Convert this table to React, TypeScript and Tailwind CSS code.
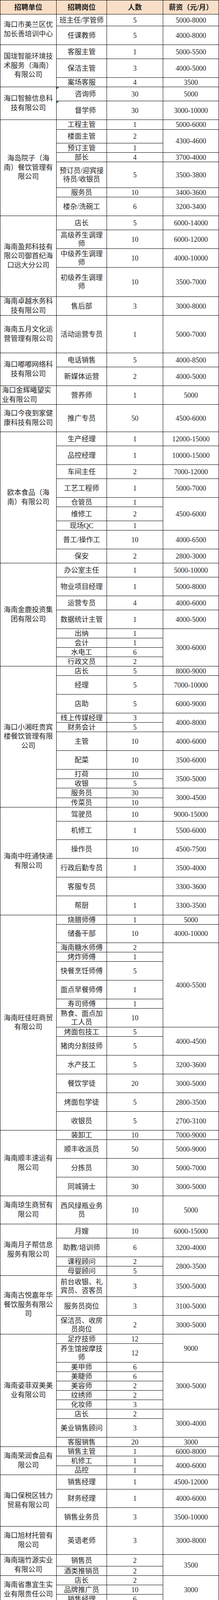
import type { ReactNode } from 'react'

type Job = {
  t: string
  n: string
  s?: string
  span?: number
  h: string
  flag?: boolean
}

type Company = {
  name: string
  left?: boolean
  jobs: Job[]
}

const spanClass: Record<number, string> = {
  1: 'row-span-1',
  2: 'row-span-2',
  3: 'row-span-3',
  4: 'row-span-4',
  5: 'row-span-5',
  6: 'row-span-6',
  7: 'row-span-7',
  8: 'row-span-8',
  9: 'row-span-9',
  10: 'row-span-10',
  11: 'row-span-11',
  14: 'row-span-14',
}

const companies: Company[] = [
  {
    name: '海口市美兰区优\n加长善培训中心',
    jobs: [
      { t: '班主任/学管师', n: '5', s: '5000-8000', h: 'h-[29px]' },
      { t: '任课教师', n: '5', s: '4000-8000', h: 'h-[47px]' },
    ],
  },
  {
    name: '国珑智能环境技\n术服务（海南）\n有限公司',
    jobs: [
      { t: '客服主管', n: '1', s: '5000-5500', h: 'h-[35px]' },
      { t: '保洁主管', n: '3', s: '4000-5000', h: 'h-[47px]' },
      { t: '案场客服', n: '4', s: '3500', h: 'h-[23px]' },
    ],
  },
  {
    name: '海口智鲸信息科\n技有限公司',
    jobs: [
      { t: '咨询师', n: '30', s: '5000', h: 'h-[35px]', flag: true },
      { t: '督学师', n: '30', s: '3000-10000', h: 'h-[47px]', flag: true },
    ],
  },
  {
    name: '海岛院子（海\n南）餐饮管理有\n限公司',
    jobs: [
      { t: '工程主管', n: '1', s: '5000-6000', h: 'h-[24px]' },
      { t: '楼面主管', n: '2', s: '4300-4600', span: 2, h: 'h-[34px]' },
      { t: '预订主管', n: '1', h: 'h-[23px]' },
      { t: '部长', n: '4', s: '3700-4000', h: 'h-[23px]' },
      { t: '预订员/迎宾接待员/收银员', n: '5', s: '3500-3800', h: 'h-[65px]' },
      { t: '服务员', n: '10', s: '3400-3600', h: 'h-[23px]' },
      { t: '楼杂/洗碗工', n: '6', s: '3200-3400', h: 'h-[47px]' },
    ],
  },
  {
    name: '海南盈邦科技有\n限公司御首纪海\n口远大分公司',
    jobs: [
      { t: '店长', n: '5', s: '6000-14000', h: 'h-[35px]' },
      { t: '高级养生调理师', n: '10', s: '6000-12000', h: 'h-[47px]' },
      { t: '中级养生调理师', n: '10', s: '4000-10000', h: 'h-[47px]' },
      { t: '初级养生调理师', n: '10', s: '3500-7000', h: 'h-[74px]' },
    ],
  },
  {
    name: '海南卓越水务科\n技有限公司',
    jobs: [{ t: '售后部', n: '3', s: '3000-8000', h: 'h-[47px]' }],
  },
  {
    name: '海南五月文化运\n营管理有限公司',
    jobs: [{ t: '活动运营专员', n: '1', s: '5000-7000', h: 'h-[95px]' }],
  },
  {
    name: '海口嘟嘟网络科\n技有限公司',
    jobs: [
      { t: '电话销售', n: '5', s: '4000-8500', h: 'h-[35px]' },
      { t: '新媒体运营', n: '2', s: '4000-5000', h: 'h-[47px]' },
    ],
  },
  {
    name: '海口金辉曦望实\n业有限公司',
    left: true,
    jobs: [{ t: '营养师', n: '1', s: '5000', h: 'h-[47px]' }],
  },
  {
    name: '海口今夜到家健\n康科技有限公司',
    jobs: [{ t: '推广专员', n: '50', s: '4500-6000', h: 'h-[69px]' }],
  },
  {
    name: '欧本食品（海\n南）有限公司',
    jobs: [
      { t: '生产经理', n: '1', s: '12000-15000', h: 'h-[35px]' },
      { t: '品控经理', n: '1', s: '10000-15000', h: 'h-[47px]' },
      { t: '车间主任', n: '2', s: '7000-12000', h: 'h-[35px]' },
      { t: '工艺工程师', n: '1', s: '5000-7000', h: 'h-[47px]' },
      { t: '仓管员', n: '1', s: '4500-6000', span: 3, h: 'h-[23px]' },
      { t: '维修工', n: '2', h: 'h-[35px]' },
      { t: '现场QC', n: '1', h: 'h-[23px]' },
      { t: '普工/操作工', n: '10', s: '4000-6500', h: 'h-[47px]' },
      { t: '保安', n: '2', s: '2800-3000', h: 'h-[35px]' },
    ],
  },
  {
    name: '海南金鹿投资集\n团有限公司',
    jobs: [
      { t: '办公室主任', n: '1', s: '5000-10000', h: 'h-[35px]' },
      { t: '物业项目经理', n: '1', s: '5000-8000', h: 'h-[47px]' },
      { t: '运营专员', n: '4', s: '4000-6000', h: 'h-[35px]' },
      { t: '数据统计主管', n: '1', s: '4000-5000', h: 'h-[47px]' },
      { t: '出纳', n: '1', s: '3000-6000', span: 4, h: 'h-[23px]' },
      { t: '会计', n: '1', h: 'h-[23px]' },
      { t: '水电工', n: '6', h: 'h-[23px]' },
      { t: '行政文员', n: '2', h: 'h-[23px]' },
    ],
  },
  {
    name: '海口小湘旺贵宾\n楼餐饮管理有限\n公司',
    jobs: [
      { t: '店长', n: '5', s: '8000-9000', h: 'h-[23px]' },
      { t: '经理', n: '5', s: '7000-10000', h: 'h-[47px]' },
      { t: '店助', n: '5', s: '6000-9000', h: 'h-[47px]' },
      { t: '线上传媒经理', n: '3', s: '4000-8000', span: 2, h: 'h-[23px]' },
      { t: '财务会计', n: '5', h: 'h-[23px]' },
      { t: '主管', n: '10', s: '4000-6000', h: 'h-[47px]' },
      { t: '配菜', n: '10', s: '3500-6000', h: 'h-[47px]' },
      { t: '打荷', n: '10', s: '3500-5000', span: 2, h: 'h-[23px]' },
      { t: '收银', n: '5', h: 'h-[23px]' },
      { t: '服务员', n: '30', s: '3000-4500', span: 2, h: 'h-[24px]' },
      { t: '传菜员', n: '10', h: 'h-[23px]' },
    ],
  },
  {
    name: '海南中旺通快递\n有限公司',
    jobs: [
      { t: '驾驶员', n: '10', s: '9000-15000', h: 'h-[35px]' },
      { t: '机修工', n: '1', s: '5500-6000', h: 'h-[46px]' },
      { t: '操作员', n: '10', s: '4500-7500', h: 'h-[47px]' },
      { t: '行政后勤专员', n: '1', s: '3500-4000', h: 'h-[47px]' },
      { t: '客服专员', n: '', s: '3300-3600', h: 'h-[47px]' },
      { t: '帮厨', n: '1', s: '3300-3500', h: 'h-[48px]' },
    ],
  },
  {
    name: '海南旺佳旺商贸\n有限公司',
    jobs: [
      { t: '烧腊师傅', n: '1', s: '5000', h: 'h-[23px]' },
      { t: '储备干部', n: '10', s: '4000-10000', h: 'h-[46px]' },
      { t: '海南糖水师傅', n: '2', s: '4000-5500', span: 6, h: 'h-[23px]' },
      { t: '烤炸师傅', n: '1', h: 'h-[23px]' },
      { t: '快餐烹饪师傅', n: '5', h: 'h-[47px]' },
      { t: '面点早餐师傅', n: '1', h: 'h-[47px]' },
      { t: '寿司师傅', n: '1', h: 'h-[23px]' },
      { t: '熟食、面点加工人员', n: '10', h: 'h-[47px]' },
      { t: '烤面包技工', n: '5', s: '4000-4500', span: 2, h: 'h-[23px]' },
      { t: '猪肉分割技师', n: '5', h: 'h-[47px]' },
      { t: '水产技工', n: '5', s: '3200-3600', h: 'h-[47px]' },
      { t: '餐饮学徒', n: '20', s: '3000-5000', h: 'h-[47px]' },
      { t: '烤面包学徒', n: '5', s: '2800-3500', h: 'h-[47px]' },
      { t: '收银员', n: '5', s: '2700-3100', h: 'h-[47px]' },
    ],
  },
  {
    name: '海南顺丰速运有\n限公司',
    jobs: [
      { t: '装卸工', n: '10', s: '7000-9000', h: 'h-[23px]' },
      { t: '顺丰收派员', n: '50', s: '5000-9000', h: 'h-[47px]' },
      { t: '分拣员', n: '30', s: '5000-7000', h: 'h-[47px]' },
      { t: '同城骑士', n: '30', s: '3000-5000', h: 'h-[47px]' },
    ],
  },
  {
    name: '海南琼生商贸有\n限公司',
    jobs: [{ t: '西风绿瓶业务员', n: '10', s: '5000', h: 'h-[71px]' }],
  },
  {
    name: '海南月子帮信息\n服务有限公司',
    jobs: [
      { t: '月嫂', n: '10', s: '6000-15000', h: 'h-[35px]' },
      { t: '助教/培训师', n: '6', s: '3200-4000', h: 'h-[47px]' },
      { t: '课程顾问', n: '2', s: '2800-3500', span: 2, h: 'h-[23px]' },
      { t: '母婴顾问', n: '5', h: 'h-[23px]' },
    ],
  },
  {
    name: '海南古悦嘉年华\n餐饮服务有限公\n司',
    jobs: [
      { t: '前台收银、礼宾员、咨客员', n: '3', s: '3500-5000', h: 'h-[53px]' },
      { t: '服务员岗位', n: '3', s: '3100-5000', h: 'h-[47px]' },
      { t: '保洁员、收房员岗位', n: '2', s: '3000-5000', h: 'h-[47px]' },
    ],
  },
  {
    name: '海南姿菲双美美\n业有限公司',
    jobs: [
      { t: '足疗技师', n: '12', s: '9000', span: 2, h: 'h-[23px]' },
      { t: '养生馆按摩技师', n: '12', h: 'h-[47px]' },
      { t: '美甲师', n: '6', s: '3000-5000', span: 5, h: 'h-[23px]' },
      { t: '美睫师', n: '6', h: 'h-[23px]' },
      { t: '美容师', n: '2', h: 'h-[23px]' },
      { t: '纹绣师', n: '2', h: 'h-[23px]' },
      { t: '化妆师', n: '3', h: 'h-[23px]' },
      { t: '店长', n: '2', s: '3000-4000', span: 2, h: 'h-[23px]' },
      { t: '美业销售顾问', n: '3', h: 'h-[47px]' },
      { t: '客服销售', n: '20', s: '3000', h: 'h-[23px]' },
    ],
  },
  {
    name: '海南荣润食品有\n限公司',
    jobs: [
      { t: '销售主管', n: '1', s: '6000-8000', h: 'h-[23px]' },
      { t: '机修工', n: '1', s: '4000-6000', span: 2, h: 'h-[24px]' },
      { t: '品控', n: '1', h: 'h-[22px]' },
    ],
  },
  {
    name: '海口保税区钱力\n贸易有限公司',
    jobs: [
      { t: '销售经理', n: '1', s: '4500-12000', h: 'h-[36px]' },
      { t: '财务经理', n: '1', s: '4000-6000', h: 'h-[46px]' },
      { t: '销售业务员', n: '3', s: '3500-10000', h: 'h-[47px]' },
    ],
  },
  {
    name: '海口旭材托管有\n限公司',
    jobs: [{ t: '英语老师', n: '3', s: '3000-8000', h: 'h-[71px]' }],
  },
  {
    name: '海南瑞竹源实业\n有限公司',
    jobs: [
      { t: '销售员', n: '2', s: '3500', span: 2, h: 'h-[29px]' },
      { t: '酒类推销员', n: '2', h: 'h-[23px]' },
    ],
  },
  {
    name: '海南省惠宜生实\n业有限责任公司',
    jobs: [
      { t: '店长', n: '2', s: '3000', span: 3, h: 'h-[23px]' },
      { t: '品牌推广员', n: '10', h: 'h-[23px]' },
      { t: '销售经理', n: '6', h: 'h-[23px]' },
    ],
  },
]

const headers = ['招聘单位', '招聘岗位', '人数', '薪资（元/月）']

export default function App() {
  const cells: ReactNode[] = []

  companies.forEach((company, ci) => {
    company.jobs.forEach((job, ji) => {
      if (ji === 0) {
        cells.push(
          <div
            key={`c-${ci}`}
            className={`${spanClass[company.jobs.length]} flex items-center bg-white px-[4px] text-[18px] leading-[23.5px] whitespace-pre-line ${
              company.left ? 'justify-start text-left' : 'justify-center text-center'
            }`}
          >
            {company.name}
          </div>,
        )
      }
      cells.push(
        <div
          key={`t-${ci}-${ji}`}
          className={`relative flex ${job.h} items-center justify-center bg-white pr-[5px] text-center text-[18px] leading-[22px] ${
            job.flag ? 'pl-[24px]' : 'pl-[5px]'
          }`}
        >
          {job.flag && (
            <span className="absolute left-0 top-0 h-0 w-0 border-r-[6px] border-t-[6px] border-r-transparent border-t-[#1e7b3c]" />
          )}
          {job.t}
        </div>,
      )
      cells.push(
        <div
          key={`n-${ci}-${ji}`}
          className="flex items-center justify-center bg-white text-[18px] leading-[20px]"
        >
          {job.n}
        </div>,
      )
      if (job.s !== undefined) {
        cells.push(
          <div
            key={`s-${ci}-${ji}`}
            className={`${spanClass[job.span ?? 1]} flex items-center justify-center bg-white text-[18px] leading-[20px]`}
          >
            {job.s}
          </div>,
        )
      }
    })
  })

  return (
    <div className="w-[561px] bg-white font-['Liberation_Serif','Noto_Sans_CJK_SC',serif] text-[#262626]">
      <div className="grid grid-cols-[143px_128px_143px_142px] gap-px border border-black bg-black">
        {headers.map((label) => (
          <div
            key={label}
            className="flex h-[35px] items-center justify-center bg-[#fadfc8] text-[18px] font-bold leading-[20px] text-[#222]"
          >
            {label}
          </div>
        ))}
        {cells}
      </div>
    </div>
  )
}
